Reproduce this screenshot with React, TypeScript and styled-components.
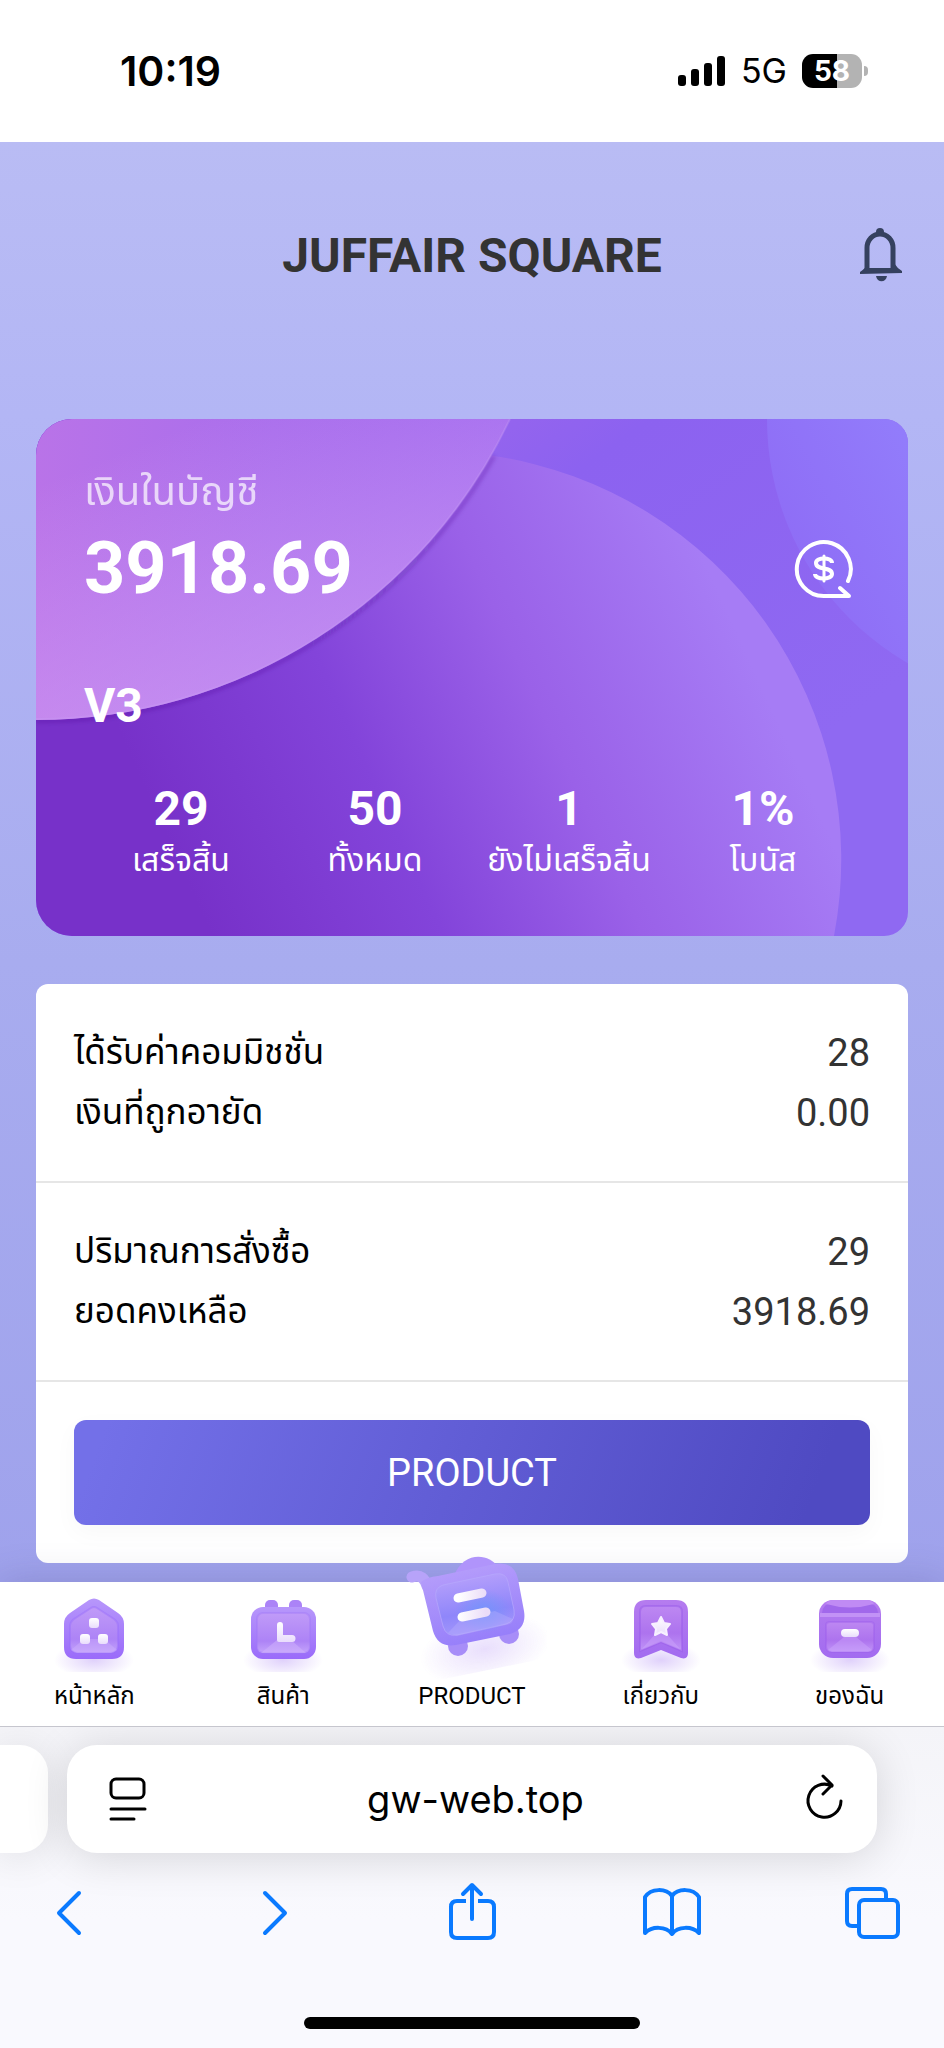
import React from 'react';
import styled, { createGlobalStyle } from 'styled-components';

const GlobalStyle = createGlobalStyle`
  *, *::before, *::after { box-sizing: border-box; }
  body {
    margin: 0;
    background: #f9f9fe;
    font-family: Roboto, "Noto Sans Thai", "Noto Sans", sans-serif;
    color: #000;
  }
  button { font: inherit; color: inherit; border: 0; padding: 0; background: none; cursor: pointer; }
  svg { display: block; }
`;

const Page = styled.div`
  display: flex;
  flex-direction: column;
  min-height: 100vh;
`;

/* ---------- phone status bar ---------- */

const StatusBar = styled.div`
  display: flex;
  justify-content: space-between;
  align-items: center;
  height: 142px;
  padding: 0 76px 0 120px;
  background: #fff;
  font-family: Inter, sans-serif;
`;

const Clock = styled.time`
  font-size: 41px;
  line-height: 48px;
  font-weight: 600;
`;

const StatusIcons = styled.div`
  display: flex;
  align-items: center;
  gap: 15px;
`;

const Network = styled.span`
  font-size: 34px;
  line-height: 40px;
`;

const Battery = styled.div`
  display: flex;
  align-items: center;
  gap: 2px;
`;

const BatteryBody = styled.span`
  width: 60px;
  height: 34px;
  border-radius: 11px;
  background: linear-gradient(90deg, #000 58%, #b3b3b3 58%);
  color: #fff;
  font-size: 28px;
  line-height: 34px;
  font-weight: 700;
  text-align: center;
`;

const BatteryTip = styled.span`
  width: 4px;
  height: 10px;
  border-radius: 0 5px 5px 0;
  background: #b3b3b3;
`;

/* ---------- web page ---------- */

const Main = styled.main`
  flex: 1;
  display: flex;
  flex-direction: column;
  padding: 0 36px 17px;
  background: linear-gradient(180deg, #b9bcf4 0%, #b3b6f5 19%, #a8acef 57%, #9fa2ec 100%);
`;

const Header = styled.header`
  display: grid;
  grid-template-columns: 60px 1fr 60px;
  align-items: center;
  height: 229px;
  margin-bottom: 48px;
  padding-bottom: 2px;
`;

const Title = styled.h1`
  grid-column: 2;
  margin: 0;
  color: #333;
  font-size: 48px;
  line-height: 56px;
  font-weight: 700;
  text-align: center;
`;

const AccountCard = styled.section`
  display: grid;
  border-radius: 36px 24px 24px 36px;
  overflow: hidden;
  color: #fff;
`;

const CardArt = styled.svg`
  grid-area: 1 / 1;
  width: 100%;
  height: 100%;
  min-height: 0;
`;

const CardBody = styled.div`
  grid-area: 1 / 1;
  display: flex;
  flex-direction: column;
  padding: 48px;
`;

const BalanceRow = styled.div`
  display: flex;
  justify-content: space-between;
  align-items: flex-end;
`;

const BalanceLabel = styled.div`
  font-size: 40px;
  line-height: 50px;
  opacity: 0.7;
`;

const Balance = styled.div`
  font-size: 72px;
  line-height: 104px;
  font-weight: 700;
`;

const RoundButton = styled.button`
  width: 60px;
  height: 60px;
  margin: 0 6px 22px;
`;

const Level = styled.div`
  margin-top: 57px;
  font-size: 48px;
  line-height: 56px;
  font-weight: 700;
`;

const Stats = styled.dl`
  display: grid;
  grid-template-columns: repeat(4, 1fr);
  margin: 47px 0 0;
`;

const Stat = styled.div`
  display: flex;
  flex-direction: column-reverse;
  text-align: center;
`;

const StatLabel = styled.dt`
  font-size: 32px;
  line-height: 46px;
  white-space: nowrap;
`;

const StatValue = styled.dd`
  margin: 0;
  font-size: 48px;
  line-height: 56px;
  font-weight: 700;
`;

const Summary = styled.section`
  margin-top: 48px;
  border-radius: 12px;
  background: #fff;
`;

const SummaryGroup = styled.dl`
  margin: 0;
  padding: 39px 38px 38px;
  border-bottom: 2px solid #e6e6e6;
`;

const SummaryRow = styled.div`
  display: flex;
  justify-content: space-between;
  line-height: 60px;
`;

const SummaryLabel = styled.dt`
  font-size: 35px;
`;

const SummaryValue = styled.dd`
  margin: 0;
  color: #333;
  font-size: 38px;
`;

const Action = styled.div`
  padding: 38px;
`;

const ProductButton = styled.button`
  width: 100%;
  height: 105px;
  border-radius: 12px;
  background: linear-gradient(110deg, #7370e8 4%, #4f4ac2 92%);
  box-shadow: 0 8px 24px rgba(0, 0, 0, 0.03);
  color: #fff;
  font-size: 38px;
`;

const TabBar = styled.nav`
  display: grid;
  grid-template-columns: repeat(5, 1fr);
  height: 144px;
  background: #fff;
  box-shadow: 0 0 36px rgba(60, 60, 110, 0.22);
  clip-path: inset(-60px 0 0 0);
`;

const Tab = styled.a`
  display: flex;
  flex-direction: column;
  align-items: center;
  justify-content: flex-end;
  padding-bottom: 12px;
  color: #000;
  font-size: 24px;
  line-height: 36px;
  text-decoration: none;
  white-space: nowrap;
`;

const TabIcon = styled.svg`
  width: 80px;
  height: 80px;
  margin-bottom: 6px;
`;

const CartIcon = styled.svg`
  width: 150px;
  height: 140px;
  margin: -60px 0 -7px;
`;

/* ---------- browser controls ---------- */

const Browser = styled.footer`
  display: flex;
  flex-direction: column;
  border-top: 1px solid #c6c6ce;
  background: linear-gradient(180deg, #f4f4f8 0%, #f9f9fe 60%, #f9f9fe 100%);
  overflow: hidden;
`;

const AddressRow = styled.div`
  display: grid;
  grid-template-columns: 48px 1fr;
  gap: 19px;
  padding: 18px 67px 0 0;
`;

const PreviousPage = styled.div`
  border-radius: 0 28px 28px 0;
  background: #fff;
  box-shadow: 0 4px 40px rgba(0, 0, 0, 0.1);
`;

const AddressBar = styled.div`
  display: flex;
  align-items: center;
  height: 108px;
  padding: 0 23px 0 30px;
  border-radius: 30px;
  background: #fff;
  box-shadow: 0 4px 44px rgba(0, 0, 0, 0.14);
`;

const Address = styled.input`
  flex: 1;
  min-width: 0;
  padding: 0;
  border: 0;
  outline: 0;
  background: none;
  color: #000;
  font: 400 38px/52px Inter, sans-serif;
  text-align: center;
`;

const Toolbar = styled.div`
  display: flex;
  justify-content: space-between;
  margin-top: 29px;
  padding: 0 42px 0 39px;
`;

const ToolButton = styled.button`
  width: 60px;
  height: 60px;
`;

const HomeIndicator = styled.div`
  width: 336px;
  height: 12px;
  margin: 75px auto 19px;
  border-radius: 6px;
  background: #000;
`;

/* ---------- icons ---------- */

const stroke = (color: string, width: number) => ({
  fill: 'none', stroke: color, strokeWidth: width,
  strokeLinecap: 'round' as const, strokeLinejoin: 'round' as const,
});

const Signal = () => (
  <svg width="48" height="32" viewBox="0 0 48 32">
    <rect x="0" y="20" width="8" height="11" rx="3" />
    <rect x="13" y="14" width="8" height="17" rx="3" />
    <rect x="26" y="8" width="8" height="23" rx="3" />
    <rect x="39" y="1" width="8" height="30" rx="3" />
  </svg>
);

const Bell = () => (
  <svg width="60" height="60" viewBox="0 4 60 60">
    <g fill="none" stroke="#35415f" strokeWidth="5">
      <path d="M19 47V26a12.500 13.500 0 0 1 26 0v21" />
    </g>
    <g fill="#35415f">
      <path d="M28 13V10a4 4 0 0 1 8 0v3z" />
      <path d="M20 41q-2 5-8 9v2l42-1v-2q-5-3-8-8l-3 5H21z" />
      <path d="M28 54h11c-1 7-10 7-11 0z" />
    </g>
  </svg>
);

const Money = () => (
  <svg width="60" height="60" viewBox="0 0 60 60">
    <g {...stroke('#fff', 4)}>
      <path d="M54 42A27 27 0 1 0 30 57H55L46 49" />
      <path d="M38 24c0-6-16-6-16 0 0 8 16 3 16 11 0 6-17 6-17 0" strokeLinecap="butt" />
      <path d="M30 17v25" strokeWidth="3" />
    </g>
  </svg>
);

const CardBackground = () => (
  <CardArt viewBox="0 0 872 517" preserveAspectRatio="none" aria-hidden="true">
    <defs>
      <linearGradient id="base" x1="0.4" y1="0" x2="1" y2="0.5">
        <stop offset="0" stopColor="#9b66ec" />
        <stop offset="0.3" stopColor="#8c62f0" />
        <stop offset="1" stopColor="#8f69f2" />
      </linearGradient>
      <linearGradient id="corner" gradientUnits="userSpaceOnUse" x1="720" y1="120" x2="880" y2="40">
        <stop offset="0" stopColor="#8e6bf5" />
        <stop offset="1" stopColor="#927cfb" />
      </linearGradient>
      <linearGradient id="hill" gradientUnits="userSpaceOnUse" x1="150" y1="460" x2="700" y2="210">
        <stop offset="0" stopColor="#7731c9" />
        <stop offset="0.35" stopColor="#8344da" />
        <stop offset="0.65" stopColor="#9a61e8" />
        <stop offset="1" stopColor="#a67cf5" />
      </linearGradient>
      <linearGradient id="discAcross" x1="0" y1="0" x2="1" y2="0">
        <stop offset="0" stopColor="#b973e8" />
        <stop offset="0.5" stopColor="#a96eec" />
        <stop offset="1" stopColor="#9d66ee" />
      </linearGradient>
      <linearGradient id="discDown" gradientUnits="userSpaceOnUse" x1="80" y1="0" x2="200" y2="300">
        <stop offset="0.1" stopColor="#d9a5f8" stopOpacity="0" />
        <stop offset="1" stopColor="#d09ef4" stopOpacity="0.65" />
      </linearGradient>
      <filter id="discShade" x="-10%" y="-10%" width="120%" height="120%">
        <feGaussianBlur stdDeviation="2" />
      </filter>
    </defs>
    <rect width="872" height="517" fill="url(#base)" />
    <circle cx="1013" cy="0" r="282" fill="url(#corner)" />
    <path d="M0 0H340L458 37A408 408 0 0 1 798 517H0Z" fill="url(#hill)" />
    <path d="M458 37A524 524 0 0 1 0 302" fill="none" stroke="#4b1590" strokeOpacity="0.4" strokeWidth="3" filter="url(#discShade)" />
    <path d="M0 0H474A524 524 0 0 1 0 301Z" fill="url(#discAcross)" />
    <path d="M0 0H474A524 524 0 0 1 0 301Z" fill="url(#discDown)" />
    <path d="M474 0A524 524 0 0 1 0 300" fill="none" stroke="#c9a0f5" strokeOpacity="0.3" strokeWidth="2" />
  </CardArt>
);

const GradientDefs = styled.svg`
  position: absolute;
  width: 0;
  height: 0;
`;

const IconGradients = () => (
  <GradientDefs aria-hidden="true">
    <defs>
      <linearGradient id="violet" x1="0" y1="0" x2="0" y2="1">
        <stop offset="0" stopColor="#b797fb" /><stop offset="1" stopColor="#9a6bfa" />
      </linearGradient>
      <linearGradient id="violetFace" x1="0" y1="0" x2="0" y2="1">
        <stop offset="0" stopColor="#c09bf8" /><stop offset="0.7" stopColor="#ad83f6" /><stop offset="1" stopColor="#c4a3fb" />
      </linearGradient>
      <linearGradient id="orchid" x1="0" y1="0" x2="0" y2="1">
        <stop offset="0" stopColor="#b57cef" /><stop offset="1" stopColor="#a26bf0" />
      </linearGradient>
      <linearGradient id="orchidFace" x1="0" y1="0" x2="0" y2="1">
        <stop offset="0" stopColor="#bd88f2" /><stop offset="0.6" stopColor="#ad73ee" /><stop offset="1" stopColor="#c093f8" />
      </linearGradient>
      <linearGradient id="pearl" x1="0" y1="0" x2="0" y2="1">
        <stop offset="0" stopColor="#fff" /><stop offset="1" stopColor="#e9dcfc" />
      </linearGradient>
      <radialGradient id="glow">
        <stop offset="0" stopColor="#b08bf5" stopOpacity="0.4" /><stop offset="1" stopColor="#b08bf5" stopOpacity="0" />
      </radialGradient>
    </defs>
  </GradientDefs>
);

const HomeIcon = () => (
  <TabIcon viewBox="0 0 80 80">
    <ellipse cx="40" cy="68" rx="40" ry="18" fill="url(#glow)" />
    <path d="M35 8Q40 5 45 8L64 21Q70 25 70 32V55Q70 67 58 67H22Q10 67 10 55V32Q10 25 16 21Z" fill="url(#violet)" />
    <path d="M37 16Q40 14 43 16L60 27Q64 30 64 34V53Q64 61 56 61H24Q16 61 16 53V34Q16 30 20 27Z" fill="url(#violetFace)" stroke="#9a6ffa" strokeOpacity="0.45" strokeWidth="2" />
    <path d="M17 58L30 47H50L63 58L57 61H23Z" fill="#d0b1fc" opacity="0.4" />
    <rect x="35" y="26" width="10" height="10" rx="3" fill="url(#pearl)" />
    <rect x="26" y="42" width="10" height="10" rx="3" fill="url(#pearl)" />
    <rect x="44" y="42" width="10" height="10" rx="3" fill="url(#pearl)" />
  </TabIcon>
);

const ClockIcon = () => (
  <TabIcon viewBox="0 0 80 80">
    <ellipse cx="40" cy="68" rx="40" ry="18" fill="url(#glow)" />
    <rect x="22" y="8" width="13" height="12" rx="5" fill="#ab83f7" />
    <rect x="46" y="8" width="13" height="12" rx="5" fill="#ab83f7" />
    <rect x="8" y="15" width="65" height="52" rx="12" fill="url(#violet)" />
    <rect x="14" y="21" width="53" height="40" rx="6" fill="url(#violetFace)" stroke="#a177f8" strokeOpacity="0.4" strokeWidth="2" />
    <path d="M18 61L34 48H48L63 61Z" fill="#d0b1fc" opacity="0.5" />
    <path d="M34 33a3 3 0 0 1 6 0v10h9a3 3 0 0 1 0 7H36q-2 0-2-2z" fill="url(#pearl)" />
  </TabIcon>
);

const BookmarkIcon = () => (
  <TabIcon viewBox="0 0 80 80">
    <ellipse cx="40" cy="68" rx="40" ry="18" fill="url(#glow)" />
    <path d="M13 20Q13 8 25 8H55Q67 8 67 20V61Q67 68 60 66L40 58L20 66Q13 68 13 61Z" fill="url(#orchid)" />
    <path d="M19 20Q19 14 25 14H55Q61 14 61 20V59L40 50L19 59Z" fill="url(#orchidFace)" stroke="#9a5cea" strokeOpacity="0.5" strokeWidth="2" />
    <path d="M20 58L36 40H44L60 58L40 50Z" fill="#d0a9fc" opacity="0.4" />
    <path d="M40 25l3 6 6 1-4 5 1 6-6-3-6 3 1-6-4-5 6-1z" fill="url(#pearl)" stroke="#f7f0ff" strokeWidth="2" strokeLinejoin="round" />
  </TabIcon>
);

const BoxIcon = () => (
  <TabIcon viewBox="0 0 80 80">
    <ellipse cx="40" cy="68" rx="40" ry="18" fill="url(#glow)" />
    <rect x="9" y="8" width="62" height="58" rx="14" fill="url(#orchid)" />
    <path d="M12 21Q13 11 23 11H57Q67 11 68 21Z" fill="#a168eb" />
    <path d="M16 12Q18 8 23 8H57Q62 8 64 12Q40 19 16 12Z" fill="#c08bf4" />
    <rect x="10" y="21" width="60" height="4" fill="#c292f6" />
    <path d="M16 33Q16 30 20 30H60Q64 30 64 33V54Q64 60 58 60H22Q16 60 16 54Z" fill="url(#orchidFace)" stroke="#9a5cea" strokeOpacity="0.4" strokeWidth="2" />
    <path d="M18 58L34 45H46L62 58L58 60H22Z" fill="#d0a9fc" opacity="0.4" />
    <rect x="31" y="37" width="18" height="8" rx="4" fill="url(#pearl)" />
  </TabIcon>
);

const Cart = () => (
  <CartIcon viewBox="0 0 150 140">
    <defs>
      <linearGradient id="cartBody" x1="0.3" y1="0" x2="0.6" y2="1">
        <stop offset="0" stopColor="#b79ffb" /><stop offset="1" stopColor="#957dfa" />
      </linearGradient>
      <linearGradient id="cartFace" x1="0.5" y1="0" x2="0.7" y2="1">
        <stop offset="0" stopColor="#b6a0fb" /><stop offset="0.6" stopColor="#8f86fa" /><stop offset="1" stopColor="#a79afb" />
      </linearGradient>
      <linearGradient id="cartLine" x1="0" y1="0" x2="1" y2="0">
        <stop offset="0" stopColor="#fff" /><stop offset="1" stopColor="#eadcf8" />
      </linearGradient>
      <radialGradient id="cartBlue">
        <stop offset="0" stopColor="#7295fb" stopOpacity="0.9" /><stop offset="1" stopColor="#7295fb" stopOpacity="0" />
      </radialGradient>
      <clipPath id="cartFloor"><path d="M0 60H150V113L42 135H0Z" /></clipPath>
    </defs>
    <g clipPath="url(#cartFloor)" opacity="0.7">
      <ellipse cx="88" cy="104" rx="66" ry="34" fill="url(#glow)" transform="rotate(-12 88 104)" />
    </g>
    <path d="M57 31C66 6 92 8 101 22Z" fill="#b094fb" />
    <circle cx="61" cy="101" r="10" fill="#a78df8" />
    <circle cx="112" cy="89" r="10" fill="#a78df8" />
    <path d="M15 32C24 29 28 34 30 41" fill="none" stroke="#b7a3f9" strokeWidth="11" strokeLinecap="round" />
    <path d="M24 37Q30 32 41 31L98 19Q117 16 121 34L127 66Q130 84 113 89L59 100Q41 103 36 86Z" fill="url(#cartBody)" />
    <path d="M46 40L98 29Q109 27 111 37L117 65Q119 76 109 79L60 90Q49 92 46 81L39 53Q37 43 46 40Z" fill="url(#cartFace)" stroke="#b7a8fc" strokeOpacity="0.7" strokeWidth="1" />
    <ellipse cx="86" cy="66" rx="28" ry="22" fill="url(#cartBlue)" />
    <path d="M51 88L65 73L98 66L116 74Q116 79 109 80L60 91Z" fill="#b9b3fd" opacity="0.35" />
    <path d="M61 53L85 48M65 72L89 67" fill="none" stroke="url(#cartLine)" strokeWidth="9" strokeLinecap="round" />
  </CartIcon>
);

const PageMenu = () => (
  <svg width="60" height="60" viewBox="0 0 60 60">
    <g {...stroke('#000', 3)}>
      <rect x="14" y="10" width="33" height="19" rx="5" />
      <path d="M14 40H48M14 50H37" />
    </g>
  </svg>
);

const Reload = () => (
  <svg width="60" height="60" viewBox="0 0 60 60">
    <g {...stroke('#000', 3)}>
      <path d="M47 32A16.500 16.500 0 1 1 38 17" />
      <path d="M29 7L38 16L29 25" />
    </g>
  </svg>
);

const BLUE = '#0a7aff';

const Back = () => <svg viewBox="0 0 60 60"><path {...stroke(BLUE, 4)} d="M40 11L20 31L40 51" /></svg>;
const Forward = () => <svg viewBox="0 0 60 60"><path {...stroke(BLUE, 4)} d="M25 11L45 31L25 51" /></svg>;
const Share = () => (
  <svg viewBox="0 0 60 60">
    <g {...stroke(BLUE, 4)}>
      <path d="M25 19H16Q10 19 10 25V50Q10 56 16 56H47Q53 56 53 50V25Q53 19 47 19H37" strokeLinecap="butt" />
      <path d="M31 37V4M22 12L31 3L40 12" />
    </g>
  </svg>
);
const Book = () => (
  <svg viewBox="0 0 60 60">
    <g {...stroke(BLUE, 4)}>
      <path d="M31 14C25 6 10 6 4 15V51C11 44 25 44 31 52C37 44 51 44 58 51V15C52 6 37 6 31 14V52" />
    </g>
  </svg>
);
const Tabs = () => (
  <svg viewBox="0 0 60 60">
    <g {...stroke(BLUE, 4)}>
      <rect x="17" y="18" width="39" height="37" rx="5" />
      <path d="M16 44H10Q5 44 5 39V12Q5 7 10 7H39Q44 7 44 12V17" />
    </g>
  </svg>
);

/* ---------- data ---------- */

const stats = [
  ['29', 'เสร็จสิ้น'],
  ['50', 'ทั้งหมด'],
  ['1', 'ยังไม่เสร็จสิ้น'],
  ['1%', 'โบนัส'],
];

const groups = [
  [['ได้รับค่าคอมมิชชั่น', '28'], ['เงินที่ถูกอายัด', '0.00']],
  [['ปริมาณการสั่งซื้อ', '29'], ['ยอดคงเหลือ', '3918.69']],
];

const tabs = [
  { label: 'หน้าหลัก', Icon: HomeIcon },
  { label: 'สินค้า', Icon: ClockIcon },
  { label: 'PRODUCT', Icon: Cart },
  { label: 'เกี่ยวกับ', Icon: BookmarkIcon },
  { label: 'ของฉัน', Icon: BoxIcon },
];

const tools = [
  { name: 'Back', Icon: Back },
  { name: 'Forward', Icon: Forward },
  { name: 'Share', Icon: Share },
  { name: 'Bookmarks', Icon: Book },
  { name: 'Tabs', Icon: Tabs },
];

export default function App() {
  return (
    <Page lang="th">
      <GlobalStyle />
      <IconGradients />
      <StatusBar>
        <Clock>10:19</Clock>
        <StatusIcons>
          <Signal />
          <Network>5G</Network>
          <Battery><BatteryBody>58</BatteryBody><BatteryTip /></Battery>
        </StatusIcons>
      </StatusBar>

      <Main>
        <Header>
          <Title>JUFFAIR SQUARE</Title>
          <button aria-label="Notifications"><Bell /></button>
        </Header>

        <AccountCard>
          <CardBackground />
          <CardBody>
            <BalanceRow>
              <div>
                <BalanceLabel>เงินในบัญชี</BalanceLabel>
                <Balance>3918.69</Balance>
              </div>
              <RoundButton aria-label="Transactions"><Money /></RoundButton>
            </BalanceRow>
            <Level>V3</Level>
            <Stats>
              {stats.map(([value, label]) => (
                <Stat key={label}>
                  <StatLabel>{label}</StatLabel>
                  <StatValue>{value}</StatValue>
                </Stat>
              ))}
            </Stats>
          </CardBody>
        </AccountCard>

        <Summary>
          {groups.map((rows, i) => (
            <SummaryGroup key={i}>
              {rows.map(([label, value]) => (
                <SummaryRow key={label}>
                  <SummaryLabel>{label}</SummaryLabel>
                  <SummaryValue>{value}</SummaryValue>
                </SummaryRow>
              ))}
            </SummaryGroup>
          ))}
          <Action><ProductButton>PRODUCT</ProductButton></Action>
        </Summary>
      </Main>

      <TabBar>
        {tabs.map(({ label, Icon }) => (
          <Tab href="#" key={label}><Icon />{label}</Tab>
        ))}
      </TabBar>

      <Browser>
        <AddressRow>
          <PreviousPage />
          <AddressBar>
            <button aria-label="Page menu"><PageMenu /></button>
            <Address aria-label="Address" defaultValue="gw-web.top" />
            <button aria-label="Reload"><Reload /></button>
          </AddressBar>
        </AddressRow>
        <Toolbar>
          {tools.map(({ name, Icon }) => (
            <ToolButton key={name} aria-label={name}><Icon /></ToolButton>
          ))}
        </Toolbar>
        <HomeIndicator />
      </Browser>
    </Page>
  );
}
